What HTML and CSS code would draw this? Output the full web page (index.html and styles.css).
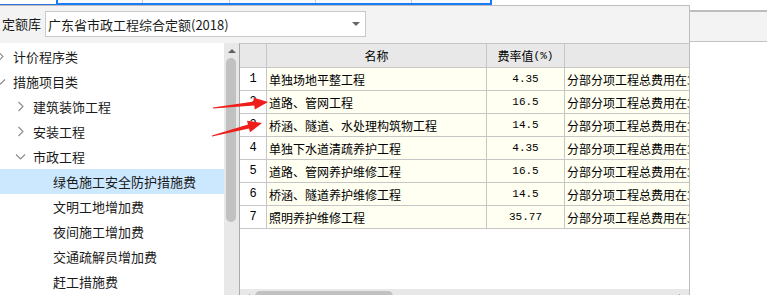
FILE: index.html
```html
<!DOCTYPE html>
<html lang="zh-CN">
<head>
    <meta charset="UTF-8">
    <meta name="viewport" content="width=device-width, initial-scale=1.0">
    <title>定额库</title>
    <link rel="stylesheet" href="styles.css">
</head>
<body>
    <div class="top-strip">
        <div class="ts-left"></div>
        <div class="ts-sel"><span></span><span></span><span></span><span></span><span></span></div>
    </div>
    <div class="main">
        <div class="panel">
            <div class="panel-head">
                <span class="lib-label">定额库</span>
                <div class="lib-select">
                    <span>广东省市政工程综合定额(2018)</span>
                    <i class="caret"></i>
                </div>
            </div>
            <div class="panel-body">
                <div class="tree">
                    <div class="tree-list" id="tree"></div>
                </div>
                <div class="vscroll">
                    <i class="arrow-up"></i>
                    <div class="vthumb"></div>
                </div>
                <div class="grid" id="grid">
                    <div class="grid-row grid-head">
                        <div class="cell"></div>
                        <div class="cell">名称</div>
                        <div class="cell">费率值<span class="mono">(%)</span></div>
                        <div class="cell"></div>
                    </div>
                    <div class="hscroll">
                        <i class="arrow-left"></i>
                        <div class="hthumb"></div>
                        <i class="arrow-right"></i>
                    </div>
                </div>
            </div>
        </div>
        <div class="backdrop"></div>
    </div>

    <svg class="marks" width="767" height="295" viewBox="0 0 767 295">
        <polygon points="213,107.4 253.9,101.5 253.5,97.5 268,102 254.8,109.5 254.3,105.5 213,108.6" />
        <polygon points="212,135.4 248,124.6 247,120.7 262,123 250,132.3 249,128.4 212,136.6" />
    </svg>

    <script>
        const treeItems = [
            { level: 0, toggle: 'closed', text: '计价程序类' },
            { level: 0, toggle: 'open', text: '措施项目类' },
            { level: 1, toggle: 'closed', text: '建筑装饰工程' },
            { level: 1, toggle: 'closed', text: '安装工程' },
            { level: 1, toggle: 'open', text: '市政工程' },
            { level: 2, text: '绿色施工安全防护措施费', selected: true },
            { level: 2, text: '文明工地增加费' },
            { level: 2, text: '夜间施工增加费' },
            { level: 2, text: '交通疏解员增加费' },
            { level: 2, text: '赶工措施费' }
        ];

        const rates = [
            ['单独场地平整工程', '4.35'],
            ['道路、管网工程', '16.5'],
            ['桥涵、隧道、水处理构筑物工程', '14.5'],
            ['单独下水道清疏养护工程', '4.35'],
            ['道路、管网养护维修工程', '16.5'],
            ['桥涵、隧道养护维修工程', '14.5'],
            ['照明养护维修工程', '35.77']
        ];

        function chevron(kind) {
            if (!kind) return '';
            const points = kind === 'open' ? '1,3.5 5.5,8 10,3.5' : '3.5,1 8,5.5 3.5,10';
            return `<svg width="11" height="11" viewBox="0 0 11 11"><polyline points="${points}" fill="none" stroke="#8a8a8a" stroke-width="1.1"/></svg>`;
        }

        function renderTree() {
            let html = '';
            treeItems.forEach(item => {
                html += `<div class="tree-row lv${item.level}${item.selected ? ' selected' : ''}">
                    <span class="toggle">${chevron(item.toggle)}</span>
                    <span>${item.text}</span>
                </div>`;
            });
            document.querySelector('#tree').innerHTML = html;
        }

        function renderGrid() {
            let html = '';
            rates.forEach((row, i) => {
                html += `<div class="grid-row">
                    <div class="cell num">${i + 1}</div>
                    <div class="cell">${row[0]}</div>
                    <div class="cell rate">${row[1]}</div>
                    <div class="cell">分部分项工程总费用在3000万元以内</div>
                </div>`;
            });
            document.querySelector('.grid-head').insertAdjacentHTML('afterend', html);
        }

        renderTree();
        renderGrid();
    </script>
</body>
</html>
```

FILE: styles.css
```css
* {
    box-sizing: border-box;
}

html, body {
    margin: 0;
    height: 295px;
    overflow: hidden;
    background: #fff;
}

body {
    position: relative;
    font-family: "Noto Sans CJK SC", "Noto Sans", sans-serif;
    font-size: 13px;
    color: #1a1a1a;
}

/* selected row of the table behind the dialog */
.top-strip {
    display: flex;
    height: 5px;
}
.ts-left {
    width: 56px;
    border-bottom: 1px solid #2b6fd8;
}
.ts-sel {
    width: 436px;
    display: grid;
    grid-template-columns: 85px 87px 86px 96px 1fr;
    border: 2px solid #1a7cf5;
    border-top: 0;
    background: #f6faff;
}
.ts-sel span {
    border-right: 1px solid #cdcdcd;
}
.ts-sel span:last-child {
    border-right: 0;
}

.main {
    display: flex;
    align-items: flex-start;
}

.panel {
    width: 690px;
    flex: none;
    border-top: 1px solid #bdbdbd;
    border-right: 1px solid #bdbdbd;
    background: #f3f3f3;
}

.backdrop {
    flex: 1;
    margin-top: 5px;
    height: 32px;
    border-top: 2px solid #bdbdbd;
    border-bottom: 1px solid #c3c3c3;
    background: #f3f3f3;
}

.panel-head {
    height: 37px;
    display: flex;
    align-items: flex-start;
    padding: 5px 0 0 2px;
}
.lib-label {
    width: 43px;
    line-height: 26px;
}
.lib-select {
    width: 321px;
    height: 26px;
    display: flex;
    align-items: center;
    justify-content: space-between;
    padding: 0 5px 0 2px;
    border: 1px solid #c9c9c9;
    background: #fff;
}
.caret {
    width: 0;
    height: 0;
    border-left: 4px solid transparent;
    border-right: 4px solid transparent;
    border-top: 4px solid #666;
}

.panel-body {
    display: flex;
    height: 262px;
}

/* tree */
.tree {
    width: 224px;
    flex: none;
    padding-top: 1px;
    background: #fff;
    overflow: hidden;
}
.tree-list {
    margin-left: -2px;
}
.tree-row {
    display: flex;
    align-items: center;
    height: 25px;
    white-space: nowrap;
}
.tree-row.selected {
    background: #cce8ff;
}
.lv1 {
    padding-left: 20px;
}
.lv2 {
    padding-left: 40px;
}
.toggle {
    width: 15px;
    flex: none;
    display: flex;
}
.toggle svg {
    margin-left: -3px;
}

.vscroll {
    width: 15px;
    flex: none;
    display: flex;
    flex-direction: column;
    align-items: center;
    padding-top: 6px;
    background: #e8e8e8;
}
.arrow-up {
    width: 0;
    height: 0;
    border-left: 4px solid transparent;
    border-right: 4px solid transparent;
    border-bottom: 4px solid #606060;
}
.vthumb {
    width: 10px;
    height: 164px;
    margin: 5px 0 0 -1px;
    border-radius: 5px;
    background: #c1c1c1;
}

/* rate grid */
.grid {
    flex: 1;
    display: flex;
    flex-direction: column;
    border-left: 1px solid #ababab;
    border-top: 1px solid #c6c6c6;
    background: #fff;
    overflow: hidden;
    font-size: 12px;
    color: #000;
}
.grid-row {
    flex: none;
    display: grid;
    grid-template-columns: 27px 220px 78px 200px;
    height: 23px;
    border-bottom: 1px solid #c6c6c6;
}
.grid-head {
    height: 24px;
    background: #e8e8e8;
}
.cell {
    display: flex;
    align-items: center;
    padding: 0 2px;
    border-right: 1px solid #c6c6c6;
    background: #fffff2;
    white-space: nowrap;
    overflow: hidden;
}
.grid-head .cell {
    justify-content: center;
    background: none;
}
.mono,
.cell.num,
.cell.rate {
    font-family: "Liberation Mono", "DejaVu Sans Mono", monospace;
    font-size: 11px;
}
.cell.num,
.cell.rate {
    justify-content: center;
}
.cell.num {
    background: #fff;
    font-size: 12px;
}

.hscroll {
    flex: none;
    margin-top: auto;
    height: 16px;
    display: flex;
    align-items: flex-start;
    padding: 2px 6px 0 6px;
    background: #e8e8e8;
}
.arrow-left {
    width: 0;
    height: 0;
    margin-top: 3px;
    border-top: 4px solid transparent;
    border-bottom: 4px solid transparent;
    border-right: 4px solid #606060;
}
.hthumb {
    width: 138px;
    height: 11px;
    margin-left: 5px;
    border-radius: 5px;
    background: #c1c1c1;
}
.arrow-right {
    width: 0;
    height: 0;
    margin: 3px 0 0 auto;
    border-top: 4px solid transparent;
    border-bottom: 4px solid transparent;
    border-left: 4px solid #606060;
}

/* annotation arrows */
.marks {
    position: absolute;
    top: 0;
    left: 0;
    pointer-events: none;
}
.marks polygon {
    fill: #f01e1a;
}
```
